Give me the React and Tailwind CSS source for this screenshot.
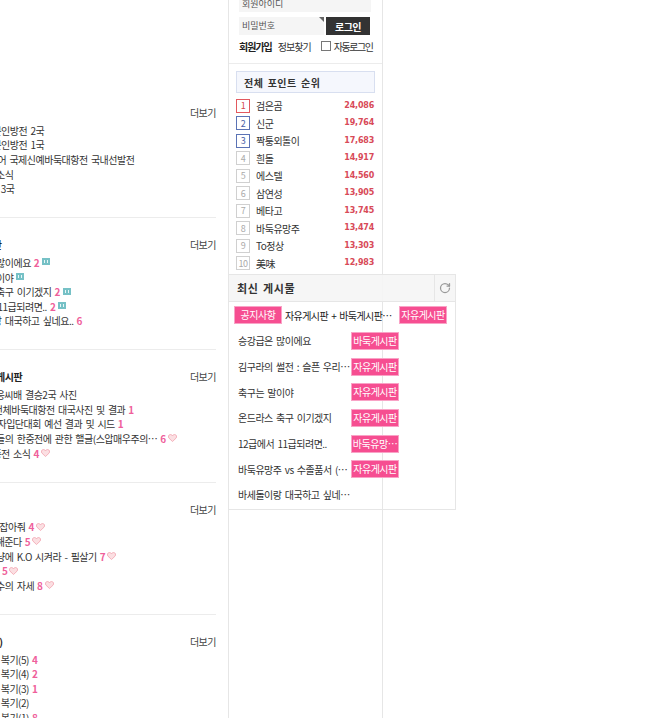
import React from 'react';
import { RotateCw } from 'lucide-react';

const font = { fontFamily: '"Noto Sans CJK KR", "Noto Sans", sans-serif' };

const sections = [
  {
    title: '공지사항',
    rows: [
      { text: '제2기 일본인방전 2국' },
      { text: '제2기 일본인방전 1국' },
      { text: '제15회 국어 국제신예바둑대항전 국내선발전' },
      { text: '입단대회 소식' },
      { text: '23기 본선 3국' },
    ],
  },
  {
    title: '자유게시판',
    rows: [
      { text: '승강급은 많이에요', count: 2, icon: 'chat' },
      { text: '축구는 말이야', icon: 'chat' },
      { text: '온드라스 축구 이기겠지', count: 2, icon: 'chat' },
      { text: '12급에서 11급되려면..', count: 2, icon: 'chat' },
      { text: '바둑돌이랑 대국하고 싶네요..', count: 6 },
    ],
  },
  {
    title: '프로소식 게시판',
    rows: [
      { text: '제8회 한 응씨배 결승2국 사진' },
      { text: '제115회 전체바둑대항전 대국사진 및 결과', count: 1 },
      { text: '제38회 여자입단대회 예선 결과 및 시드', count: 1 },
      { text: '이번 시즌들의 한중전에 관한 핼글(스압매우주의…', count: 6, icon: 'heart' },
      { text: '제3기 한중전 소식', count: 4, icon: 'heart' },
    ],
  },
  {
    title: '유머',
    rows: [
      { text: '상대 대마 잡아줘', count: 4, icon: 'heart' },
      { text: '바둑1 잘 해준다', count: 5, icon: 'heart' },
      { text: '대마의 사냥에 K.O 시켜라 - 필살기', count: 7, icon: 'heart' },
      { text: '이겼어요 -', count: 5, icon: 'heart' },
      { text: '진정한 강수의 자세', count: 8, icon: 'heart' },
    ],
  },
  {
    title: '강좌 (복기)',
    rows: [
      { text: '19단 프로 복기(5)', count: 4 },
      { text: '19단 프로 복기(4)', count: 2 },
      { text: '19단 프로 복기(3)', count: 1 },
      { text: '19단 프로 복기(2)' },
      { text: '19단 프로 복기(1)', count: 8 },
    ],
  },
];

const ranks = [
  ['검은곰', '24,086'],
  ['신군', '19,764'],
  ['짝퉁외톨이', '17,683'],
  ['흰돌', '14,917'],
  ['에스텔', '14,560'],
  ['삼연성', '13,905'],
  ['베타고', '13,745'],
  ['바둑유망주', '13,474'],
  ['To정상', '13,303'],
  ['美味', '12,983'],
];

const latest = [
  ['승강급은 많이에요', '바둑게시판'],
  ['김구라의 썰전 : 슬픈 우리…', '자유게시판'],
  ['축구는 말이야', '자유게시판'],
  ['온드라스 축구 이기겠지', '자유게시판'],
  ['12급에서 11급되려면..', '바둑유망…'],
  ['바둑유망주 vs 수졸품서 (…', '자유게시판'],
  ['바세돌이랑 대국하고 싶네…', null],
];

const ChatIcon = () => (
  <svg width="8" height="8" viewBox="0 0 8 8" className="ml-[3px] shrink-0">
    <rect width="8" height="7" fill="#76c1c6" />
    <rect x="2" y="2" width="1" height="3" fill="#e8f6f7" />
    <rect x="5" y="2" width="1" height="3" fill="#e8f6f7" />
  </svg>
);

const HeartIcon = () => (
  <svg width="9" height="8" viewBox="0 0 9 8" className="ml-[2px] shrink-0">
    <path d="M4.5 7.5 1 4.2C-.3 2.8.6.5 2.4.5c1 0 1.7.5 2.1 1.3C4.9 1 5.6.5 6.6.5c1.8 0 2.7 2.3 1.4 3.7Z" fill="#fbdfe2" stroke="#f2a3b0" strokeWidth="0.8" />
  </svg>
);

const Tag = ({ children, className = '' }) => (
  <span className={`flex h-[18px] w-12 shrink-0 items-center justify-center overflow-hidden whitespace-nowrap border border-[#f9a3c6] bg-[#f6458b]/95 text-[10px] leading-none text-white ${className}`}>
    {children}
  </span>
);

const Section = ({ title, rows }) => (
  <div className="h-[132.2px] border-b border-[#ececec] pt-[19px]">
    <div className="flex h-[15px] items-center justify-between">
      <b className="-ml-[42px] whitespace-nowrap text-[10px] font-bold text-[#222]">{title}</b>
      <span className="text-[10px] text-[#444]">더보기</span>
    </div>
    <ul className="-ml-[42px] mt-[3px]">
      {rows.map((row) => (
        <li key={row.text} className="flex h-[14.6px] items-center whitespace-pre text-[10px] text-[#333]">
          {row.text}
          {row.count && <b className="ml-[3px] font-bold text-[#ef5f9b]">{row.count}</b>}
          {row.icon === 'chat' && <ChatIcon />}
          {row.icon === 'heart' && <HeartIcon />}
        </li>
      ))}
    </ul>
  </div>
);

const Sidebar = () => (
  <div className="relative h-full w-[155px] shrink-0 border-x border-[#e6e6e6] px-[7px]">
    <div className="-mt-[6px] ml-[3px] flex h-[18px] w-[132px] items-center bg-[#f5f5f5] pl-[3px] pt-[1px] text-[9px] tracking-normal text-[#555]">
      회원아이디
    </div>
    <div className="ml-[3px] mt-[5px] flex w-[132px] gap-[2px]">
      <div className="relative flex h-[18px] w-[85px] items-center bg-[#f5f5f5] pl-[3px] text-[9px] tracking-normal text-[#555]">
        <span>비밀번호</span>
        <span className="absolute right-0 top-0 border-l-[5px] border-t-[5px] border-l-transparent border-t-[#666]" />
      </div>
      <button className="h-[18px] w-[44px] bg-[#333] text-[10px] font-bold text-white">로그인</button>
    </div>
    <div className="ml-[3px] mt-[2px] flex h-[18px] items-center whitespace-nowrap text-[10px] tracking-[-1px] text-[#333]">
      <b className="font-bold text-[#222]">회원가입</b>
      <span className="ml-[6px]">정보찾기</span>
      <span className="ml-[10px] h-[10px] w-[10px] shrink-0 border border-[#777] bg-white" />
      <span className="ml-[3px] tracking-[-1.4px]">자동로그인</span>
    </div>
    <div className="-mx-[7px] mt-[8px] border-t border-[#ececec]" />
    <div className="mt-[7px] flex h-[22px] w-[139px] items-center border border-[#d8dff0] bg-[#f5f7fd] pl-[7px] text-[10px] font-bold tracking-[0.5px] text-[#333]">
      전체 포인트 순위
    </div>
    <ul className="mt-[4px]">
      {ranks.map(([name, point], i) => (
        <li key={name} className="flex h-[17.5px] items-center">
          <span
            className={`flex h-[14px] w-[14px] shrink-0 items-center justify-center border text-[9px] leading-none ${
              i === 0
                ? 'border-[#e2595f] text-[#d5474d]'
                : i < 3
                  ? 'border-[#5b73b5] text-[#4a62a8]'
                  : 'border-[#d0d0d0] text-[#aaa]'
            }`}
          >
            {i + 1}
          </span>
          <span className="ml-[6px] flex-1 text-[10px] text-[#333]">{name}</span>
          <span className="mr-[1px] text-[8px] font-bold tracking-[-0.2px] text-[#d84a58]" style={{ fontFamily: '"DejaVu Sans", sans-serif' }}>
            {point}
          </span>
        </li>
      ))}
    </ul>

    {/* 최신 게시물 overlay */}
    <div className="absolute -left-px top-[274px] h-[236px] w-[228px] border border-[#e6e6e6]">
      <div className="flex h-[27px] items-center justify-between border-b border-[#e6e6e6] bg-[#f5f5f5]/90">
        <b className="ml-[8px] text-[11px] font-bold tracking-[0.6px] text-[#333]">최신 게시물</b>
        <span className="flex h-full w-[21px] items-center justify-center border-l border-[#e6e6e6]">
          <RotateCw size={12} strokeWidth={2.5} className="text-[#999]" />
        </span>
      </div>
      <div className="px-[5px] pt-[4px]">
        <div className="flex h-[18px] items-center text-[10px] text-[#222]">
          <Tag>공지사항</Tag>
          <span className="ml-[3px] w-[114px] shrink-0 whitespace-nowrap tracking-[-0.6px]">자유게시판 + 바둑게시판…</span>
          <Tag>자유게시판</Tag>
        </div>
        <ul className="mt-[4px]">
          {latest.map(([text, tag]) => (
            <li key={text} className="flex h-[25.7px] items-center text-[10px] text-[#333]">
              <span className="ml-[4px] w-[113px] shrink-0 whitespace-nowrap">{text}</span>
              {tag && <Tag>{tag}</Tag>}
            </li>
          ))}
        </ul>
      </div>
    </div>
  </div>
);

export default function App() {
  return (
    <div className="flex h-[718px] w-[650px] overflow-hidden bg-white tracking-[-0.5px] [word-spacing:1.5px]" style={font}>
      <div className="w-[228px] shrink-0 pr-3 pt-[86px]">
        {sections.map((s) => (
          <Section key={s.title} {...s} />
        ))}
      </div>
      <Sidebar />
    </div>
  );
}
